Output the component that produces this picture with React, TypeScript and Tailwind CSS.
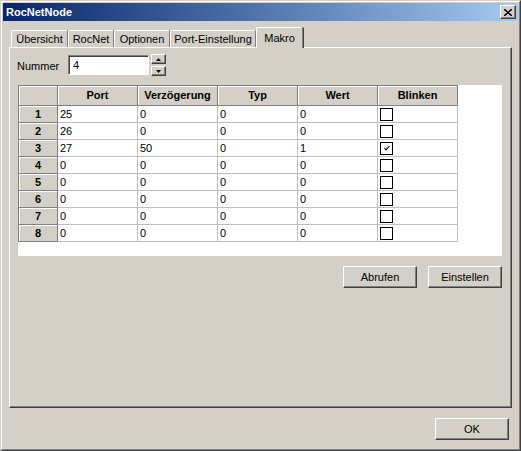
import React from "react";

const raised =
  "border border-t-white border-l-white border-r-[#404040] border-b-[#404040] shadow-[inset_-1px_-1px_0_#808080] bg-[#d4d0c8]";

const rows: [string, string, string, string, boolean][] = [
  ["25", "0", "0", "0", false],
  ["26", "0", "0", "0", false],
  ["27", "50", "0", "1", true],
  ["0", "0", "0", "0", false],
  ["0", "0", "0", "0", false],
  ["0", "0", "0", "0", false],
  ["0", "0", "0", "0", false],
  ["0", "0", "0", "0", false],
];

const tabs = [
  { label: "Übersicht", w: "w-[57px]" },
  { label: "RocNet", w: "w-[46px]" },
  { label: "Optionen", w: "w-[56px]" },
  { label: "Port-Einstellung", w: "w-[86px]" },
];

function Tab({ label, w }: { label: string; w: string }) {
  return (
    <div
      className={`${w} h-[17px] flex items-center justify-center border-t border-l border-white border-r border-r-[#808080] shadow-[1px_0_0_#404040] rounded-tl-[2px] rounded-tr-[2px]`}
    >
      {label}
    </div>
  );
}

function Checkbox({ checked }: { checked: boolean }) {
  return (
    <div className="w-[13px] h-[13px] border border-black bg-white flex items-center justify-center">
      {checked && (
        <svg width="6" height="6" viewBox="0 0 6 6">
          <path d="M0.5 3 L2 4.8 L5.5 1" stroke="#000" strokeWidth="1.1" fill="none" />
        </svg>
      )}
    </div>
  );
}

function Arrow({ up }: { up: boolean }) {
  return (
    <svg width="5" height="3" viewBox="0 0 5 3">
      <path d={up ? "M2.5 0 L5 3 L0 3 Z" : "M0 0 L5 0 L2.5 3 Z"} fill="#000" />
    </svg>
  );
}

export default function App() {
  const headCell =
    "bg-[#d4d0c8] border-r border-b border-[#808080] shadow-[inset_1px_1px_0_#fff] flex items-center justify-center font-bold";
  return (
    <div className="w-[521px] h-[451px] bg-[#d4d0c8] border border-t-[#d4d0c8] border-l-[#d4d0c8] border-r-[#404040] border-b-[#404040] text-[11px] text-black font-['Liberation_Sans',Arial,sans-serif] leading-none">
      <div className="w-full h-full border border-t-white border-l-white border-r-[#808080] border-b-[#808080] p-[1px] flex flex-col">
        {/* title bar */}
        <div className="h-[18px] flex items-center bg-gradient-to-r from-[#0a246a] to-[#a6caf0] pl-[3px] pr-[2px]">
          <span className="text-white font-bold text-[11px] flex-1">RocNetNode</span>
          <div className={`${raised} w-[16px] h-[14px] flex items-center justify-center`}>
            <svg width="8" height="7" viewBox="0 0 8 7">
              <path d="M0 0 L8 7 M8 0 L0 7" stroke="#000" strokeWidth="1.6" />
            </svg>
          </div>
        </div>

        {/* tabs */}
        <div className="mt-[6px] ml-[6px] mr-[6px] flex flex-col">
          <div className="flex items-end h-[20px] pl-[2px]">
            {tabs.map((t) => (
              <Tab key={t.label} label={t.label} w={t.w} />
            ))}
            <div className="w-[47px] h-[21px] -mb-[1px] relative bg-[#d4d0c8] flex items-start justify-center pt-[5px] border-t border-l border-white border-r border-r-[#808080] shadow-[1px_0_0_#404040] rounded-tl-[2px] rounded-tr-[2px]">
              Makro
            </div>
          </div>

          {/* panel */}
          <div className="h-[361px] border border-t-white border-l-white border-r-[#404040] border-b-[#404040] shadow-[inset_-1px_-1px_0_#808080] pt-[7px] pl-[7px] flex flex-col">
            <div className="flex items-start">
              <span className="w-[51px] pt-[6px]">Nummer</span>
              <div className="w-[81px] h-[20px] border border-t-[#808080] border-l-[#808080] border-r-white border-b-white shadow-[inset_1px_1px_0_#404040] bg-white flex items-center pl-[4px]">
                4
              </div>
              <div className="ml-[2px] -mt-[1px] flex flex-col gap-[2px]">
                <div className={`${raised} w-[15px] h-[10px] flex items-center justify-center`}>
                  <Arrow up />
                </div>
                <div className={`${raised} w-[15px] h-[10px] flex items-center justify-center`}>
                  <Arrow up={false} />
                </div>
              </div>
            </div>

            {/* grid */}
            <div className="mt-[9px] ml-[1px] w-[484px] h-[171px] bg-white flex flex-col">
              <div className="flex h-[21px]">
                <div className={`${headCell} w-[40px] border-l border-t`} />
                {["Port", "Verzögerung", "Typ", "Wert", "Blinken"].map((h) => (
                  <div key={h} className={`${headCell} w-[80px] border-t`}>
                    {h}
                  </div>
                ))}
              </div>
              {rows.map((r, i) => (
                <div key={i} className="flex h-[17px]">
                  <div className={`${headCell} w-[40px] border-l`}>{i + 1}</div>
                  {r.slice(0, 4).map((v, j) => (
                    <div
                      key={j}
                      className="w-[80px] border-r border-b border-[#c0c0c0] flex items-center pl-[2px]"
                    >
                      {v as string}
                    </div>
                  ))}
                  <div className="w-[80px] border-r border-b border-[#c0c0c0] flex items-center pl-[2px]">
                    <Checkbox checked={r[4]} />
                  </div>
                </div>
              ))}
            </div>

            <div className="mt-[10px] w-[485px] flex justify-end gap-[11px]">
              <div className={`${raised} w-[74px] h-[22px] flex items-center justify-center`}>Abrufen</div>
              <div className={`${raised} w-[74px] h-[22px] flex items-center justify-center`}>Einstellen</div>
            </div>
          </div>
        </div>

        {/* bottom */}
        <div className="mt-[10px] flex justify-end pr-[9px]">
          <div className={`${raised} w-[74px] h-[22px] flex items-center justify-center`}>OK</div>
        </div>
      </div>
    </div>
  );
}
